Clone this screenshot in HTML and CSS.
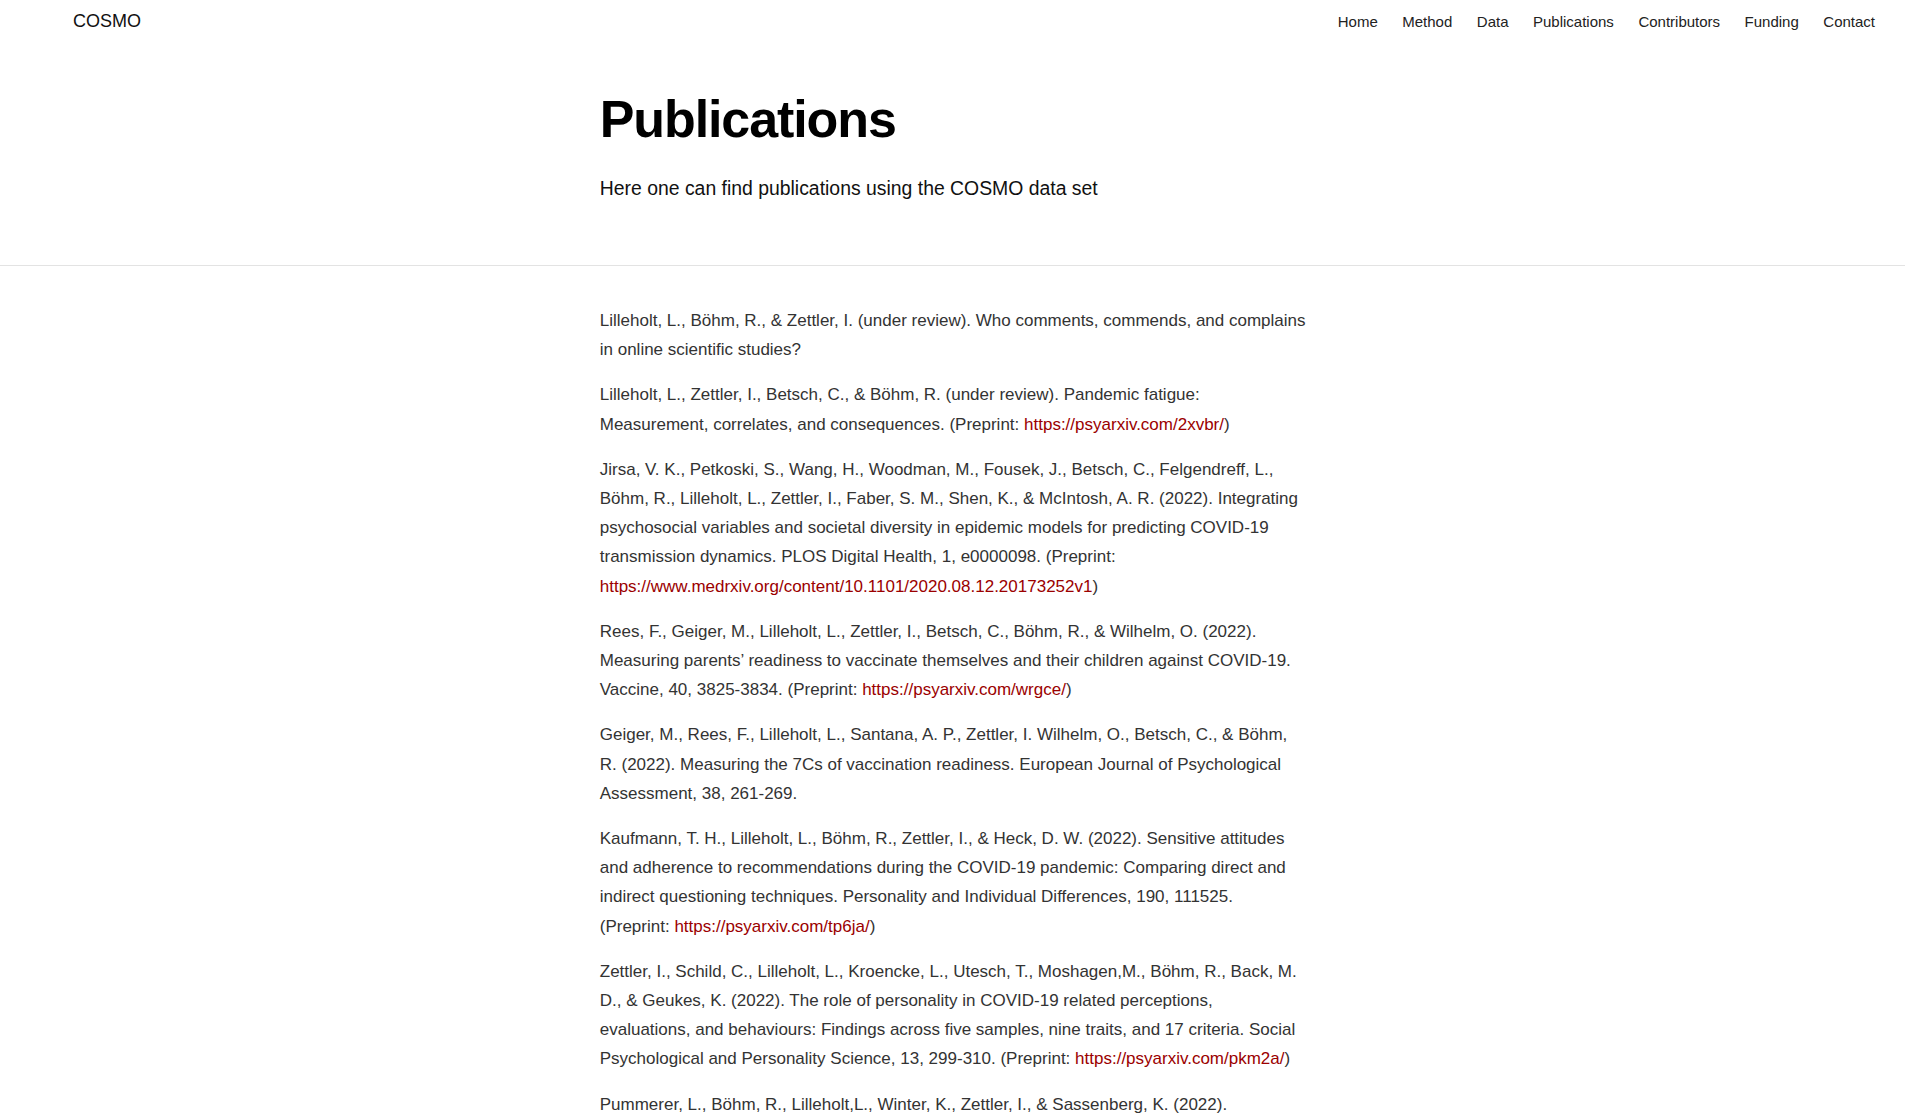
FILE: index.html
```html
<!DOCTYPE html>
<html lang="en">
<head>
<meta charset="utf-8">
<title>Publications — COSMO</title>
<link rel="stylesheet" href="styles.css">
</head>
<body>
<header class="site-header">
  <a class="logo" href="#">COSMO</a>
  <nav class="nav">
    <a href="#">Home</a>
    <a href="#">Method</a>
    <a href="#">Data</a>
    <a href="#">Publications</a>
    <a href="#">Contributors</a>
    <a href="#">Funding</a>
    <a href="#">Contact</a>
  </nav>
</header>

<section class="hero">
  <div class="column">
    <h1 class="title">Publications</h1>
    <p class="lead">Here one can find publications using the COSMO data set</p>
  </div>
</section>

<main class="content">
  <div class="column">
    <p class="ref">Lilleholt, L., Böhm, R., &amp; Zettler, I. (under review). Who comments, commends, and complains in online scientific studies?</p>
    <p class="ref">Lilleholt, L., Zettler, I., Betsch, C., &amp; Böhm, R. (under review). Pandemic fatigue: Measurement, correlates, and consequences. (Preprint: <a href="#">https://psyarxiv.com/2xvbr/</a>)</p>
    <p class="ref">Jirsa, V. K., Petkoski, S., Wang, H., Woodman, M., Fousek, J., Betsch, C., Felgendreff, L., Böhm, R., Lilleholt, L., Zettler, I., Faber, S. M., Shen, K., &amp; McIntosh, A. R. (2022). Integrating psychosocial variables and societal diversity in epidemic models for predicting COVID-19 transmission dynamics. PLOS Digital Health, 1, e0000098. (Preprint: <a href="#">https://www.medrxiv.org/content/10.1101/2020.08.12.20173252v1</a>)</p>
    <p class="ref">Rees, F., Geiger, M., Lilleholt, L., Zettler, I., Betsch, C., Böhm, R., &amp; Wilhelm, O. (2022). Measuring parents’ readiness to vaccinate themselves and their children against COVID-19. Vaccine, 40, 3825-3834. (Preprint: <a href="#">https://psyarxiv.com/wrgce/</a>)</p>
    <p class="ref">Geiger, M., Rees, F., Lilleholt, L., Santana, A. P., Zettler, I. Wilhelm, O., Betsch, C., &amp; Böhm, R. (2022). Measuring the 7Cs of vaccination readiness. European Journal of Psychological Assessment, 38, 261-269.</p>
    <p class="ref">Kaufmann, T. H., Lilleholt, L., Böhm, R., Zettler, I., &amp; Heck, D. W. (2022). Sensitive attitudes and adherence to recommendations during the COVID-19 pandemic: Comparing direct and indirect questioning techniques. Personality and Individual Differences, 190, 111525. (Preprint: <a href="#">https://psyarxiv.com/tp6ja/</a>)</p>
    <p class="ref">Zettler, I., Schild, C., Lilleholt, L., Kroencke, L., Utesch, T., Moshagen,M., Böhm, R., Back, M. D., &amp; Geukes, K. (2022). The role of personality in COVID-19 related perceptions, evaluations, and behaviours: Findings across five samples, nine traits, and 17 criteria. Social Psychological and Personality Science, 13, 299-310. (Preprint: <a href="#">https://psyarxiv.com/pkm2a/</a>)</p>
    <p class="ref">Pummerer, L., Böhm, R., Lilleholt,L., Winter, K., Zettler, I., &amp; Sassenberg, K. (2022). Conspiracy theories and their societal effects during the COVID-19 pandemic. Social Psychological and Personality Science, 13, 49-59.</p>
  </div>
</main>
</body>
</html>
```

FILE: styles.css
```css
* { box-sizing: border-box; }

html, body {
  margin: 0;
  padding: 0;
  background: #ffffff;
}

body {
  font-family: "Liberation Sans", Arial, Helvetica, sans-serif;
  color: #111;
}

a { text-decoration: none; }

.site-header {
  display: flex;
  justify-content: space-between;
  align-items: baseline;
  padding: 9px 30px 0 73px;
  height: 42px;
}

.logo {
  font-size: 18px;
  line-height: 24px;
  color: #111;
}

.nav {
  display: flex;
  gap: 24.5px;
}

.nav a {
  font-size: 15px;
  line-height: 24px;
  color: #222;
}

.column {
  width: 707.5px;
  margin: 0 auto;
  padding-left: 1px;
}

.hero {
  padding: 46px 0 61px;
  border-bottom: 1px solid #e3e3e3;
}

.title {
  margin: 0;
  font-size: 52px;
  line-height: 62px;
  font-weight: 700;
  letter-spacing: -1.1px;
  color: #000;
}

.lead {
  margin: 22px 0 0;
  font-size: 19.4px;
  line-height: 32px;
  color: #111;
}

.content {
  padding-top: 40px;
}

.ref {
  margin: 0 0 16px;
  font-size: 17px;
  line-height: 29.2px;
  color: #333;
}

.ref a {
  color: #9b0000;
}
```
